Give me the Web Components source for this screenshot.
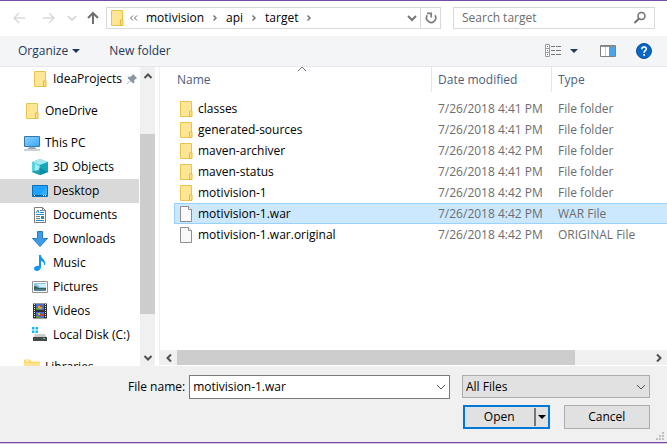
<!DOCTYPE html>
<html lang="en">
<head>
<meta charset="utf-8">
<title>Open</title>
<style>
body { margin: 0; font: 12px/16px "Open Sans", "Noto Sans", sans-serif; color: #000; background: #fff; }
</style>
</head>
<body>
<file-dialog></file-dialog>
<script>
const ICONS = {
  folder: '<path d="M2.5 .5h11v15h-11z" fill="#ffe695" stroke="#e9c44c"/><path d="M11.5 15.5v-5.5q1-1 2.5 0v5.5z" fill="#ffe083" stroke="#e6bb3b"/>',
  library: '<path d="M0 1.5q0-1 1-1h5l1.500 2H16V16H0z" fill="#ffd867"/><path d="M2 1.500h3v1H2z" fill="#fff"/><path d="M0 4h16v12H0z" fill="#ffe394"/>',
  file: '<path d="M2.500.5h8l3 3v12h-11z" fill="#f9f9f9" stroke="#8d8d8d"/><path d="M10.500.5v3h3" fill="#fff" stroke="#8d8d8d"/>',
  pc: '<defs><linearGradient id="g" x2="1" y2="1"><stop stop-color="#8ad4ff"/><stop offset="1" stop-color="#36a7f4"/></linearGradient></defs><path d="M.5 1.500h15v10H.5z" fill="url(#g)" stroke="#3878a3"/><path d="M5 12h6v1H5z" fill="#9fb5c4"/><path d="M0 15h16M4 13.500h8" stroke="#8fa5b6"/>',
  cube: '<path d="M8 0l8 3v10l-8 3-8-3V3z" fill="#35c3d3"/><path d="M8 0l8 3-8 3-8-3z" fill="#a5e9ef"/><path d="M0 3l8 3v10l-8-3z" fill="#59d5df"/><path d="M8 6l8-3v10l-8 3z" fill="#15a8bd"/><path d="M8 9l8 4-8 3-8-3z" fill="#087f98" opacity=".65"/><path d="M3 5l4 2v4l-4 1z" fill="#c3f5f5" opacity=".7"/>',
  desktop: '<path d="M.5 2.500h15v11H.5z" fill="#1ea2fd" stroke="#0672bd"/><path d="M1 12.500h14" stroke="#075f9e"/><path d="M2 12.500h1M11 12.500h1M13 12.500h1" stroke="#fff"/><path d="M8 12L15 4v8z" fill="#54b9ff" opacity=".5"/>',
  doc: '<path d="M2.500.5h8l3 3v12h-11z" fill="#fff" stroke="#7e7e7e"/><path d="M10.500.5v3h3" fill="none" stroke="#7e7e7e"/><path d="M4 6l2-3 1 3M8 3.500h2M8 5.500h4M4 7.500h8M4 13.500h8" fill="none" stroke="#258bd0"/><path d="M4 9.500h4M4 11.500h4" stroke="#777"/><path d="M9 9h3v3H9z" fill="#35869e"/>',
  down: '<path d="M5.500.5h5v7h5L8 15.500.5 7.500h5z" fill="#3e9be9" stroke="#2a7cc4"/>',
  music: '<path d="M7 0h2c0 4 5 4 4 10h-1c0-3-1-3-3-4v6c0 2-2 4-4 4s-3-1-3-2.500C2 11.500 5 10.500 7 11z" fill="#1296ef"/>',
  picture: '<path d="M.5 2.500h15v11H.5z" fill="#fff" stroke="#929292"/><path d="M2 4h12v8H2z" fill="#8cc8ee"/><path d="M5 5h9v3H8z" fill="#d6edfa"/><path d="M2 7q3 0 5 2h7v1H2z" fill="#33644f"/><path d="M2 10h12v2H2z" fill="#4f8298"/>',
  video: '<path d="M1 .5h14v15H1z" fill="#303030"/><path d="M2.500 1v14M13.500 1v14" stroke="#e8e8e8" stroke-dasharray="1 1"/><path d="M4 1h8v6H4zM4 9h8v6H4z" fill="#4673cd"/><path d="M6 3h4v3H6z" fill="#e5a22e"/><path d="M8 2h2v2H8zM8 11h3v2H8z" fill="#cc4229"/><path d="M4 5h3v2H4zM4 13h4v2H4z" fill="#55973c"/><path d="M6 10h2v2H6z" fill="#e2b333"/>',
  disk: '<path d="M0 0h2.500v2.500H0zM3.500 0H6v2.500H3.500zM0 3.500h2.500V6H0zM3.500 3.500H6V6H3.500z" fill="#14baf2"/><path d="M3 7h10l2 4H1z" fill="#c9cccd"/><path d="M1 10h14v4H1z" fill="#44494b"/><path d="M11 11.500h2" stroke="#48e063"/>',
  pin: '<path d="M9 1l6 6-2 .5-2 2.500 0 3-1.500 1L6 10.500 1.500 15 1 14.500 5.500 10 2 6.500 3 5h3l2.500-2z" fill="#8b98a3"/>',
  back: '<path d="M14 8H3M8 3L3 8l5 5" fill="none" stroke="#dadada" stroke-width="1.500"/>',
  forward: '<path d="M2 8h11M8 3l5 5-5 5" fill="none" stroke="#dadada" stroke-width="1.500"/>',
  up: '<path d="M8 14V3M3 8l5-5 5 5" fill="none" stroke="#6f6f6f" stroke-width="2"/>',
  chevdown: '<path d="M4 6l4 4 4-4" fill="none" stroke="currentColor" stroke-width="var(--w,1)"/>',
  chevup: '<path d="M4 10l4-4 4 4" fill="none" stroke="currentColor" stroke-width="var(--w,1)"/>',
  chevleft: '<path d="M10 4L6 8l4 4" fill="none" stroke="currentColor" stroke-width="var(--w,1)"/>',
  chevright: '<path d="M6 4l4 4-4 4" fill="none" stroke="currentColor" stroke-width="var(--w,1)"/>',
  smallup: '<path d="M4.500 10L8 6.500l3.500 3.500" fill="none" stroke="currentColor" stroke-width="2"/>',
  smalldown: '<path d="M4.500 6L8 9.500 11.500 6" fill="none" stroke="currentColor" stroke-width="2"/>',
  smallleft: '<path d="M10 4.500L6.500 8l3.500 3.500" fill="none" stroke="currentColor" stroke-width="2"/>',
  smallright: '<path d="M6 4.500L9.500 8 6 11.500" fill="none" stroke="currentColor" stroke-width="2"/>',
  crumb: '<path d="M6.500 5.500L9 8l-2.500 2.500" fill="none" stroke="#777" stroke-width="1.500"/>',
  dblleft: '<path d="M7 5.500L4.500 8 7 10.500M11 5.500L8.500 8l2.500 2.500" fill="none" stroke="#666"/>',
  refresh: '<path d="M12 5.300A4.600 4.600 0 1 1 4.300 5.200" fill="none" stroke="#7d7d7d" stroke-width="1.700"/><path d="M4 3.300h4.200v4.200" fill="none" stroke="#7d7d7d" stroke-width="1.700"/>',
  search: '<circle cx="9.500" cy="6" r="3.500" fill="none" stroke="#6f6f6f" stroke-width="1.500"/><path d="M7 8.500L2.500 13" stroke="#6f6f6f" stroke-width="2"/>',
  tri: '<path d="M4 6h8l-4 4z" fill="currentColor"/>',
  view: '<path d="M.5 1.500h4v12h-4zM.5 5.500h4M.5 9.500h4" fill="#fff" stroke="#9a9a9a"/><path d="M2 3.500h1" stroke="#666"/><path d="M2 7.500h1" stroke="#2580d8"/><path d="M2 11.500h1" stroke="#d22"/><path d="M6 3.500h4M11 3.500h5M6 7.500h4M11 7.500h5M6 11.500h4M11 11.500h5" stroke="#777"/>',
  pane: '<path d="M.5 2.500h15v11H.5z" fill="#fff" stroke="#808080"/><path d="M1 3h14v1H1z" fill="#8f8f8f"/><path d="M9 4h6v9H9z" fill="#4aa3ea"/><path d="M5.500 4v9" stroke="#ccc"/>',
  help: '<circle cx="8" cy="8" r="7.500" fill="#0767c8" stroke="#0a4f98"/><path d="M5.800 6.200c0-3 4.500-2.800 4.500-.4 0 1.700-2.200 1.800-2.200 3.900M8.100 11v1.800" fill="none" stroke="#fff" stroke-width="1.700"/>'
};

const define = (name, css, html) => customElements.define(name, class extends HTMLElement {
  constructor() {
    super();
    const t = document.createElement('template');
    t.innerHTML = `<style>*{box-sizing:border-box}button,input,select{font:inherit;color:inherit;margin:0;padding:0;border:0;background:none;border-radius:0;outline:0}button{display:flex;align-items:center}${css}</style>${typeof html === 'function' ? html(this) : html}`;
    this.attachShadow({ mode: 'open' }).append(t.content.cloneNode(true));
  }
});

define('ui-icon', ':host{display:block;flex:none;width:16px;height:16px}svg{display:block;width:100%;height:100%}',
  el => `<svg viewBox="0 0 16 16" aria-hidden="true">${ICONS[el.getAttribute('name')]}</svg>`);

define('path-crumb', ':host{display:flex;align-items:center}a{color:#000;text-decoration:none;padding:0 3px}',
  '<a href="#"><slot></slot></a><ui-icon name="crumb"></ui-icon>');

define('address-bar', `
:host{display:flex;align-items:center;gap:12px;padding:6px 12px 7px 11px;height:35px}
.nav{display:flex;gap:14px;width:83px}
.nav button:nth-child(3){margin:0 -9px 0 -7px;color:#d0d0d0;--w:1.5}
.path{flex:1;display:flex;align-items:center;height:22px;border:1px solid #d9d9d9;min-width:0;padding-left:2px}
.path>ui-icon{margin-right:1px}
.spacer{flex:1}
.hist{color:#777;--w:2}
.refresh{border-left:1px solid #d9d9d9;height:20px;padding:0 1px 0 2px}
.search{display:flex;align-items:center;width:202px;height:22px;border:1px solid #d9d9d9;padding:0 6px 0 8px}
input{flex:1;min-width:0}
input::placeholder{color:#6d6d6d;opacity:1}`,
`<div class="nav">
<button aria-label="Back"><ui-icon name="back"></ui-icon></button>
<button aria-label="Forward"><ui-icon name="forward"></ui-icon></button>
<button aria-label="Recent"><ui-icon name="chevdown"></ui-icon></button>
<button aria-label="Up"><ui-icon name="up"></ui-icon></button></div>
<div class="path"><ui-icon name="folder"></ui-icon><ui-icon name="dblleft"></ui-icon>
<path-crumb>motivision</path-crumb><path-crumb>api</path-crumb><path-crumb>target</path-crumb>
<span class="spacer"></span><button class="hist" aria-label="History"><ui-icon name="chevdown"></ui-icon></button>
<button class="refresh" aria-label="Refresh"><ui-icon name="refresh"></ui-icon></button></div>
<div class="search"><input type="search" aria-label="Search target" placeholder="Search target"><ui-icon name="search"></ui-icon></div>`);

define('command-bar', `
:host{display:flex;align-items:center;height:31px;padding:0 15px 0 18px;background:#f4f5f7;border-bottom:1px solid #e4e8ec;color:#1e395b}
.new{margin-left:25px}.spacer{flex:1}.drop{margin:0 18px 0 5px}.help{margin-left:20px}`,
`<button>Organize<ui-icon name="tri"></ui-icon></button><button class="new">New folder</button><span class="spacer"></span>
<button aria-label="View"><ui-icon name="view"></ui-icon></button><button class="drop" aria-label="More views"><ui-icon name="tri"></ui-icon></button>
<button aria-label="Preview pane"><ui-icon name="pane"></ui-icon></button><button class="help" aria-label="Help"><ui-icon name="help"></ui-icon></button>`);

define('tree-item', `
:host{display:flex;align-items:center;flex:none;gap:5px;height:24px;padding-left:32px;white-space:nowrap}
:host([root]){padding-left:24px;margin-top:8px}
:host([selected]){background:#d9d9d9}
ui-icon[name=pin]{width:12px;height:12px;margin-left:-1px}`,
el => `<ui-icon name="${el.getAttribute('icon')}"></ui-icon><span><slot></slot></span>${el.hasAttribute('pinned') ? '<ui-icon name="pin"></ui-icon>' : ''}`);

define('scroll-bar', `
:host{display:flex;flex-direction:column;flex:none;width:15px;background:#f0f0f0;color:#505050}
:host([horizontal]){flex-direction:row;width:auto;height:15px}
button{flex:none;width:15px;height:17px;justify-content:center}
:host([horizontal]) button{width:17px;height:15px}
.track{flex:1;display:flex;flex-direction:inherit}
.thumb{background:#cdcdcd}
.before{flex:var(--before)}.thumb{flex:var(--thumb)}.after{flex:var(--after)}`,
el => { const h = el.hasAttribute('horizontal');
  return `<button aria-label="Scroll back"><ui-icon name="${h ? 'smallleft' : 'smallup'}"></ui-icon></button>
<div class="track"><i class="before"></i><i class="thumb"></i><i class="after"></i></div>
<button aria-label="Scroll forward"><ui-icon name="${h ? 'smallright' : 'smalldown'}"></ui-icon></button>`; });

define('folder-tree', `
:host{display:flex;width:160px;flex:none;min-height:0;overflow:hidden}
nav{display:flex;flex-direction:column;flex:1;overflow:hidden;padding-right:1px}
scroll-bar{--before:50;--thumb:180;--after:35}
.edge{width:5px;border-right:1px solid #f0f0f0}`,
`<nav><tree-item icon="folder" pinned>IdeaProjects</tree-item>
<tree-item root icon="folder">OneDrive</tree-item>
<tree-item root icon="pc">This PC</tree-item>
<tree-item icon="cube">3D Objects</tree-item>
<tree-item icon="desktop" selected>Desktop</tree-item>
<tree-item icon="doc">Documents</tree-item>
<tree-item icon="down">Downloads</tree-item>
<tree-item icon="music">Music</tree-item>
<tree-item icon="picture">Pictures</tree-item>
<tree-item icon="video">Videos</tree-item>
<tree-item icon="disk">Local Disk (C:)</tree-item>
<tree-item root icon="library">Libraries</tree-item></nav><scroll-bar></scroll-bar><div class="edge"></div>`);

const FILES = [
  ['folder', 'classes', '7/26/2018 4:41 PM', 'File folder'],
  ['folder', 'generated-sources', '7/26/2018 4:41 PM', 'File folder'],
  ['folder', 'maven-archiver', '7/26/2018 4:42 PM', 'File folder'],
  ['folder', 'maven-status', '7/26/2018 4:41 PM', 'File folder'],
  ['folder', 'motivision-1', '7/26/2018 4:42 PM', 'File folder'],
  ['file', 'motivision-1.war', '7/26/2018 4:42 PM', 'WAR File', true],
  ['file', 'motivision-1.war.original', '7/26/2018 4:42 PM', 'ORIGINAL File']
];
define('file-list', `
:host{display:flex;flex-direction:column;flex:1;min-width:0}
.area{flex:1;min-height:0;overflow:hidden;padding-left:14px}
table{width:100%;border-collapse:separate;border-spacing:0;table-layout:fixed;white-space:nowrap}
th{font-weight:400;text-align:left;color:#4c607a;height:25px;padding:0 0 0 6px;border-left:1px solid #e5e5e5;position:relative}
th:first-child{padding-left:3px;border:0}
thead ui-icon{position:absolute;left:50%;top:-6px;margin-left:-9px;color:#777}
tbody:before{content:"";display:block;height:6px}
td{height:21px;padding:0 0 0 7px;color:#6d6d6d}
td:first-child{padding-left:4px;color:#000}
td span{display:flex;align-items:center;gap:4px}
.sel td{background:#cce8ff;box-shadow:inset 0 1px #99d1ff,inset 0 -1px #99d1ff}
.sel td:first-child{box-shadow:inset 0 1px #99d1ff,inset 0 -1px #99d1ff,inset 1px 0 #99d1ff}
scroll-bar{margin-bottom:1px;--before:0;--thumb:398;--after:75}`,
`<div class="area"><table><colgroup><col style="width:257px"><col style="width:120px"><col></colgroup>
<thead><tr><th>Name<ui-icon name="chevup"></ui-icon></th><th>Date modified</th><th>Type</th></tr></thead>
<tbody>${FILES.map(f => `<tr${f[4] ? ' class="sel"' : ''}><td><span><ui-icon name="${f[0]}"></ui-icon>${f[1]}</span></td><td>${f[2]}</td><td>${f[3]}</td></tr>`).join('')}</tbody></table></div>
<scroll-bar horizontal></scroll-bar>`);

define('dialog-footer', `
:host{display:grid;grid-template-columns:1fr 188px;gap:6px 12px;padding:9px 17px 13px 128px;background:#f0f0f0;position:relative}
.name{display:flex;align-items:center;gap:4px;min-width:0}
.combo{flex:1;display:flex;align-items:center;height:24px;min-width:0;border:1px solid #7a7a7a;background:#fff;padding:0 0 0 3px;color:#000}
input{flex:1;min-width:0}
.combo ui-icon,.type ui-icon{color:#555}
.type{position:relative;height:23px}
select{appearance:none;width:100%;height:23px;background:#e1e1e1;border:1px solid #adadad;padding:0 20px 0 3px}
.type ui-icon{position:absolute;right:1px;top:4px;pointer-events:none}
.actions{grid-column:2;display:grid;grid-template-columns:1fr 1fr;gap:14px;padding-left:1px;height:24px}
.actions>button{justify-content:center;background:#e1e1e1;border:1px solid #adadad}
.open{display:flex;background:#e1e1e1;border:2px solid #0078d7}
.open button:first-child{flex:1;justify-content:center}
.open button:last-child{width:14px;justify-content:center;border-left:2px solid #777;margin:1px 0}
.grip{position:absolute;right:3px;bottom:2px;width:8px;height:8px}`,
`<div class="name"><label for="fn">File name:</label><div class="combo"><input id="fn" value="motivision-1.war"><button aria-label="Show names"><ui-icon name="chevdown"></ui-icon></button></div></div>
<div class="type"><select aria-label="File type"><option>All Files</option></select><ui-icon name="chevdown"></ui-icon></div>
<div class="actions"><div class="open"><button>Open</button><button aria-label="Open options"><ui-icon name="tri"></ui-icon></button></div><button>Cancel</button></div>
<svg class="grip" viewBox="0 0 8 8" fill="#bfbfbf" aria-hidden="true"><path d="M6 0h2v2H6zM3 3h2v2H3zM6 3h2v2H6zM0 6h2v2H0zM3 6h2v2H3zM6 6h2v2H6z"/></svg>`);

define('file-dialog', `
:host{display:flex;flex-direction:column;height:100vh;border-top:1px solid #744da9;box-sizing:border-box}
main{display:flex;flex:1;min-height:0}
.frame{flex:none;height:2px;background:#d3c6e4;border-top:1px solid #744da9}`,
`<address-bar></address-bar><command-bar></command-bar><main><folder-tree></folder-tree><file-list></file-list></main><dialog-footer></dialog-footer><div class="frame"></div>`);
</script>
</body>
</html>
